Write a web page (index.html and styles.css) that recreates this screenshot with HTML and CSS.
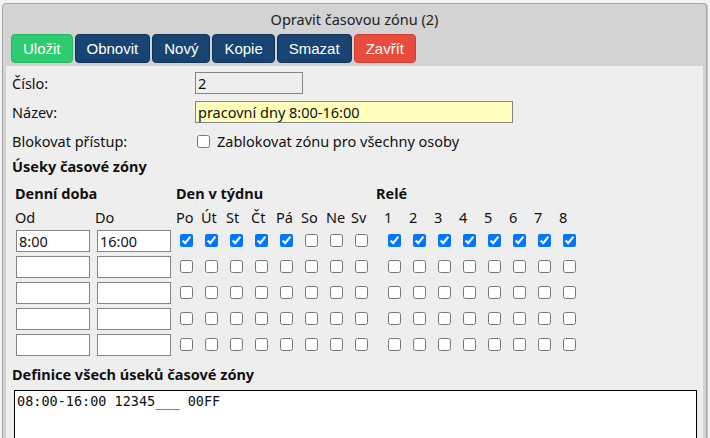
FILE: index.html
```html
<!DOCTYPE html>
<html lang="cs">
<head>
<meta charset="utf-8">
<title>Opravit časovou zónu</title>
<link rel="stylesheet" href="styles.css">
</head>
<body>
<div class="window">
  <div class="title">Opravit časovou zónu (2)</div>
  <div class="toolbar">
    <button class="btn btn-green">Uložit</button>
    <button class="btn btn-navy">Obnovit</button>
    <button class="btn btn-navy">Nový</button>
    <button class="btn btn-navy">Kopie</button>
    <button class="btn btn-navy">Smazat</button>
    <button class="btn btn-red">Zavřít</button>
  </div>
  <div class="content">
    <div class="form">
      <div class="label">Číslo:</div>
      <div><input class="inp inp-num" type="text" value="2" disabled></div>
      <div class="label">Název:</div>
      <div><input class="inp inp-name" type="text" value="pracovní dny 8:00-16:00"></div>
      <div class="label">Blokovat přístup:</div>
      <div class="checkline"><input type="checkbox" class="cb-block" id="blk"><label for="blk">Zablokovat zónu pro všechny osoby</label></div>
    </div>
    <div class="heading">Úseky časové zóny</div>
    <div class="grid">
      <div class="gh gh-time">Denní doba</div>
      <div class="gh gh-days">Den v týdnu</div>
      <div class="gh gh-relay">Relé</div>

      <div class="sub">Od</div><div class="sub">Do</div>
      <div class="sub">Po</div><div class="sub">Út</div><div class="sub">St</div><div class="sub">Čt</div><div class="sub">Pá</div><div class="sub">So</div><div class="sub">Ne</div><div class="sub">Sv</div>
      <div></div>
      <div class="sub">1</div><div class="sub">2</div><div class="sub">3</div><div class="sub">4</div><div class="sub">5</div><div class="sub">6</div><div class="sub">7</div><div class="sub">8</div>

      <div class="cell"><input class="inp inp-time" value="8:00"></div><div class="cell"><input class="inp inp-time" value="16:00"></div>
      <div class="cell"><input type="checkbox" checked></div><div class="cell"><input type="checkbox" checked></div><div class="cell"><input type="checkbox" checked></div><div class="cell"><input type="checkbox" checked></div><div class="cell"><input type="checkbox" checked></div><div class="cell"><input type="checkbox"></div><div class="cell"><input type="checkbox"></div><div class="cell"><input type="checkbox"></div>
      <div></div>
      <div class="cell"><input type="checkbox" checked></div><div class="cell"><input type="checkbox" checked></div><div class="cell"><input type="checkbox" checked></div><div class="cell"><input type="checkbox" checked></div><div class="cell"><input type="checkbox" checked></div><div class="cell"><input type="checkbox" checked></div><div class="cell"><input type="checkbox" checked></div><div class="cell"><input type="checkbox" checked></div>

      <div class="cell"><input class="inp inp-time"></div><div class="cell"><input class="inp inp-time"></div>
      <div class="cell"><input type="checkbox"></div><div class="cell"><input type="checkbox"></div><div class="cell"><input type="checkbox"></div><div class="cell"><input type="checkbox"></div><div class="cell"><input type="checkbox"></div><div class="cell"><input type="checkbox"></div><div class="cell"><input type="checkbox"></div><div class="cell"><input type="checkbox"></div>
      <div></div>
      <div class="cell"><input type="checkbox"></div><div class="cell"><input type="checkbox"></div><div class="cell"><input type="checkbox"></div><div class="cell"><input type="checkbox"></div><div class="cell"><input type="checkbox"></div><div class="cell"><input type="checkbox"></div><div class="cell"><input type="checkbox"></div><div class="cell"><input type="checkbox"></div>

      <div class="cell"><input class="inp inp-time"></div><div class="cell"><input class="inp inp-time"></div>
      <div class="cell"><input type="checkbox"></div><div class="cell"><input type="checkbox"></div><div class="cell"><input type="checkbox"></div><div class="cell"><input type="checkbox"></div><div class="cell"><input type="checkbox"></div><div class="cell"><input type="checkbox"></div><div class="cell"><input type="checkbox"></div><div class="cell"><input type="checkbox"></div>
      <div></div>
      <div class="cell"><input type="checkbox"></div><div class="cell"><input type="checkbox"></div><div class="cell"><input type="checkbox"></div><div class="cell"><input type="checkbox"></div><div class="cell"><input type="checkbox"></div><div class="cell"><input type="checkbox"></div><div class="cell"><input type="checkbox"></div><div class="cell"><input type="checkbox"></div>

      <div class="cell"><input class="inp inp-time"></div><div class="cell"><input class="inp inp-time"></div>
      <div class="cell"><input type="checkbox"></div><div class="cell"><input type="checkbox"></div><div class="cell"><input type="checkbox"></div><div class="cell"><input type="checkbox"></div><div class="cell"><input type="checkbox"></div><div class="cell"><input type="checkbox"></div><div class="cell"><input type="checkbox"></div><div class="cell"><input type="checkbox"></div>
      <div></div>
      <div class="cell"><input type="checkbox"></div><div class="cell"><input type="checkbox"></div><div class="cell"><input type="checkbox"></div><div class="cell"><input type="checkbox"></div><div class="cell"><input type="checkbox"></div><div class="cell"><input type="checkbox"></div><div class="cell"><input type="checkbox"></div><div class="cell"><input type="checkbox"></div>

      <div class="cell"><input class="inp inp-time"></div><div class="cell"><input class="inp inp-time"></div>
      <div class="cell"><input type="checkbox"></div><div class="cell"><input type="checkbox"></div><div class="cell"><input type="checkbox"></div><div class="cell"><input type="checkbox"></div><div class="cell"><input type="checkbox"></div><div class="cell"><input type="checkbox"></div><div class="cell"><input type="checkbox"></div><div class="cell"><input type="checkbox"></div>
      <div></div>
      <div class="cell"><input type="checkbox"></div><div class="cell"><input type="checkbox"></div><div class="cell"><input type="checkbox"></div><div class="cell"><input type="checkbox"></div><div class="cell"><input type="checkbox"></div><div class="cell"><input type="checkbox"></div><div class="cell"><input type="checkbox"></div><div class="cell"><input type="checkbox"></div>
    </div>
    <div class="heading heading-def">Definice všech úseků časové zóny</div>
    <textarea class="defs" rows="6">08:00-16:00 12345___ 00FF</textarea>
  </div>
</div>
</body>
</html>
```
FILE: styles.css
```css
html, body {
  margin: 0;
  height: 100%;
  overflow: hidden;
}
body {
  background: #f3f3f3;
  padding: 3px 3px 0 2px;
  box-sizing: border-box;
  font-family: "Noto Sans", "Open Sans", sans-serif;
  font-size: 14.5px;
  color: #111;
}
.window {
  border: 1px solid #a6a6a6;
  border-radius: 4px;
  background: #d3d3d3;
  padding: 0 3px 3px 3px;
  height: 500px;
  box-shadow: 1px 0 0 #c4c4c4;
}
.title {
  height: 30px;
  line-height: 30px;
  text-align: center;
  color: #222;
}
.toolbar {
  display: flex;
  gap: 2px;
  padding-left: 5px;
  height: 29px;
  margin-bottom: 3px;
}
.btn {
  font-family: "Liberation Sans", Arial, sans-serif;
  font-size: 15px;
  color: #fff;
  height: 29px;
  padding: 0 11px;
  border-radius: 4px;
  border: 1px solid transparent;
  line-height: 27px;
}
.btn-green { background: #2ecc71; border-color: #28b563; }
.btn-navy { background: #174472; border-color: #0f3359; }
.btn-red { background: #e74c3c; border-color: #cf3b2c; }
.content {
  background: #eeeeee;
  padding: 6px 6px 0 6px;
  height: 420px;
}
.form {
  display: grid;
  grid-template-columns: 183px 1fr;
  grid-auto-rows: 22px;
  row-gap: 7px;
}
.label {
  line-height: 22px;
}
.inp {
  box-sizing: border-box;
  height: 22px;
  margin: 0;
  border: 1px solid #858585;
  font-family: "Noto Sans", "Open Sans", sans-serif;
  font-size: 14.5px;
  color: #111;
  padding: 0 2px;
  background: #fff;
  outline: none;
}
.inp-num { width: 108px; background: #eeeeee; color: #111; }
.inp-name { width: 318px; background: #ffffbb; }
.checkline {
  display: flex;
  align-items: center;
  height: 22px;
}
.checkline label { margin-left: 7px; }
input[type="checkbox"] {
  width: 13px;
  height: 13px;
  margin: 0;
}
.cb-block { margin-left: 2px !important; }
.heading {
  font-weight: bold;
  line-height: 22px;
  margin-top: 3px;
}
.grid {
  display: grid;
  grid-template-columns: 81px 81px repeat(8, 25px) 8px repeat(8, 25px);
  grid-template-rows: 24px 24px repeat(5, 26px);
  margin: 4px 0 0 2px;
}
.gh { font-weight: bold; line-height: 24px; }
.gh-time { grid-column: 1 / 3; padding-left: 1px; }
.gh-days { grid-column: 3 / 11; }
.gh-relay { grid-column: 11 / 20; }
.sub { line-height: 24px; }
.sub:nth-child(4) { padding-left: 1px; }
.cell { display: flex; align-items: flex-start; }
.cell .inp-time { width: 74px; margin: 1px 0 0 2px; }
.cell input[type="checkbox"] { margin: 5px 0 0 4px; }
.heading-def {
  line-height: 26px;
  margin-top: 2px;
}
.defs {
  display: block;
  box-sizing: border-box;
  width: 683px;
  height: 120px;
  margin: 3px 0 0 2px;
  border: 1px solid #000;
  background: #fff;
  font-family: "DejaVu Sans Mono", "Liberation Mono", monospace;
  font-size: 13.5px;
  padding: 2px 2px;
  resize: none;
  color: #111;
}
```
